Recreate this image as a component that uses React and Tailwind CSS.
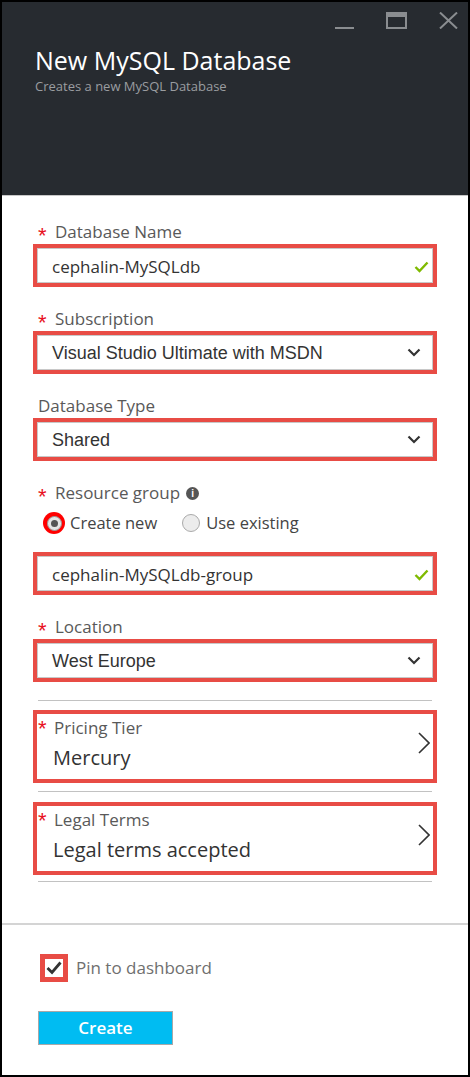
import React from "react";

const SEGOE = { fontFamily: '"Open Sans", "Noto Sans", sans-serif' };
const ARIAL = { fontFamily: '"Liberation Sans", Arial, sans-serif' };

function Label({ required, children, extra }) {
  return (
    <div className="h-6 flex items-center pl-[5px]">
      {required ? <span className="w-[17px] text-[#e81123] text-[22px] leading-none pt-[7px]" style={ARIAL}>*</span> : null}
      <span className="text-[17px] text-[#595959] leading-6" style={SEGOE}>{children}</span>
      {extra}
    </div>
  );
}

function Chevron() {
  return (
    <svg width="14" height="9" viewBox="0 0 14 9" className="mr-[11px]">
      <path d="M1.5 1.5 L7 7 L12.5 1.5" fill="none" stroke="#333" strokeWidth="2.2" />
    </svg>
  );
}

function Check() {
  return (
    <svg width="15" height="12" viewBox="0 0 15 12" className="mr-[3px] mt-[3px]">
      <path d="M1.5 6 L5.5 10 L13.5 1.5" fill="none" stroke="#7fba00" strokeWidth="2.4" />
    </svg>
  );
}

function Box({ children, right, arial }) {
  return (
    <div className="h-[43px] shrink-0 border-[4px] border-[#e84c45]">
      <div className="h-full border border-[#c8c8c8] bg-white flex items-center justify-between pl-[14px]">
        <span
          className={arial ? "text-[18px] text-[#333] pt-[2px]" : "text-[17px] text-[#333] pt-[2px]"}
          style={arial ? ARIAL : SEGOE}
        >
          {children}
        </span>
        {right}
      </div>
    </div>
  );
}

function Tile({ label, value }) {
  return (
    <div className="h-[73px] shrink-0 border-[4px] border-[#e84c45] bg-white flex items-start justify-between">
      <div className="flex flex-col pt-[1px]">
        <div className="flex items-start h-[26px]">
          <span className="w-[17px] pl-[1px] text-[#e81123] text-[22px] leading-none pt-[3px]" style={ARIAL}>*</span>
          <span className="text-[17px] text-[#595959] leading-[26px]" style={SEGOE}>{label}</span>
        </div>
        <div className="pl-[16px] text-[20px] text-[#333] leading-[30px] mt-[2px]" style={SEGOE}>{value}</div>
      </div>
      <svg width="12" height="22" viewBox="0 0 12 22" className="mr-[3px] mt-[18px]">
        <path d="M1 1 L11 11 L1 21" fill="none" stroke="#333" strokeWidth="1.6" />
      </svg>
    </div>
  );
}

export default function App() {
  return (
    <div className="w-[470px] h-[1077px] border-2 border-black bg-white flex flex-col overflow-hidden">
      {/* Header */}
      <div className="h-[194px] bg-[#272b30] border-b border-[#c8c8c8] shrink-0 flex flex-col pl-[33px]">
        <div className="flex justify-end items-start pt-[10px] pr-[10px] gap-[32px] h-[30px]">
          <svg width="19" height="20" viewBox="0 0 19 20">
            <rect x="0" y="15" width="19" height="2" fill="#8a8d90" />
          </svg>
          <svg width="21" height="17" viewBox="0 0 21 17">
            <rect x="1" y="1" width="19" height="15" fill="none" stroke="#8a8d90" strokeWidth="2" />
            <rect x="1" y="1" width="19" height="4" fill="#8a8d90" />
          </svg>
          <svg width="19" height="17" viewBox="0 0 19 17">
            <path d="M1 0.5 L18 16.5 M18 0.5 L1 16.5" stroke="#8a8d90" strokeWidth="2" />
          </svg>
        </div>
        <div className="text-[25px] text-white leading-[32px] mt-[12px]" style={SEGOE}>New MySQL Database</div>
        <div className="text-[13px] text-[#9a9da0] leading-[18px] mt-[1px]" style={SEGOE}>Creates a new MySQL Database</div>
      </div>

      {/* Form */}
      <div className="px-[31px] pt-[24px] flex flex-col shrink-0">
        <Label required>Database Name</Label>
        <Box right={<Check />}>cephalin-MySQLdb</Box>

        <div className="mt-5">
          <Label required>Subscription</Label>
          <Box arial right={<Chevron />}>Visual Studio Ultimate with MSDN</Box>
        </div>

        <div className="mt-5">
          <Label>Database Type</Label>
          <Box arial right={<Chevron />}>Shared</Box>
        </div>

        <div className="mt-5">
          <Label
            required
            extra={
              <span className="ml-[6px] w-[13px] h-[13px] rounded-full bg-[#555] text-white text-[10px] font-bold leading-[13px] text-center" style={ARIAL}>i</span>
            }
          >
            Resource group
          </Label>
          <div className="mt-[6px] h-6 flex items-center pl-[10px]">
            <span className="w-[22px] h-[22px] rounded-full bg-[#ff0000] flex items-center justify-center">
              <span className="w-[15px] h-[15px] rounded-full bg-[#e6e6e6] border border-[#999] flex items-center justify-center">
                <span className="w-[7px] h-[7px] rounded-full bg-[#555]" />
              </span>
            </span>
            <span className="ml-[5px] text-[16.5px] text-[#444]" style={SEGOE}>Create new</span>
            <span className="ml-[25px] w-[18px] h-[18px] rounded-full bg-[#ececec] border border-[#aaa]" />
            <span className="ml-[6px] text-[16.5px] text-[#444]" style={SEGOE}>Use existing</span>
          </div>
          <div className="mt-[17px]">
            <Box right={<Check />}>cephalin-MySQLdb-group</Box>
          </div>
        </div>

        <div className="mt-5">
          <Label required>Location</Label>
          <Box arial right={<Chevron />}>West Europe</Box>
        </div>

        <div className="mt-[18px] mx-[5px] h-px bg-[#c2c2c2]" />
        <div className="mt-[9px]">
          <Tile label="Pricing Tier" value="Mercury" />
        </div>
        <div className="mt-2 mx-[5px] h-px bg-[#c2c2c2]" />
        <div className="mt-[10px]">
          <Tile label="Legal Terms" value="Legal terms accepted" />
        </div>
        <div className="mt-[6px] mx-[5px] h-px bg-[#c2c2c2]" />
      </div>

      {/* Footer */}
      <div className="mt-[41px] h-[2px] shrink-0 bg-[#d4d4d4]" />
      <div className="px-[36px] pt-[29px] flex flex-col">
        <div className="flex items-center pl-[2px]">
          <span className="w-[28px] h-[28px] border-[5px] border-[#e84c45] bg-white flex items-center justify-center">
            <svg width="16" height="14" viewBox="0 0 16 14">
              <path d="M1.5 7 L6 11.5 L14.5 1.5" fill="none" stroke="#333" strokeWidth="2.8" />
            </svg>
          </span>
          <span className="ml-[8px] text-[17px] text-[#6f6f6f]" style={SEGOE}>Pin to dashboard</span>
        </div>
        <button
          className="mt-[29px] w-[135px] h-[34px] bg-[#00bcf2] border border-[#a8a8a8] text-white text-[17px] font-semibold"
          style={SEGOE}
        >
          Create
        </button>
      </div>
    </div>
  );
}
